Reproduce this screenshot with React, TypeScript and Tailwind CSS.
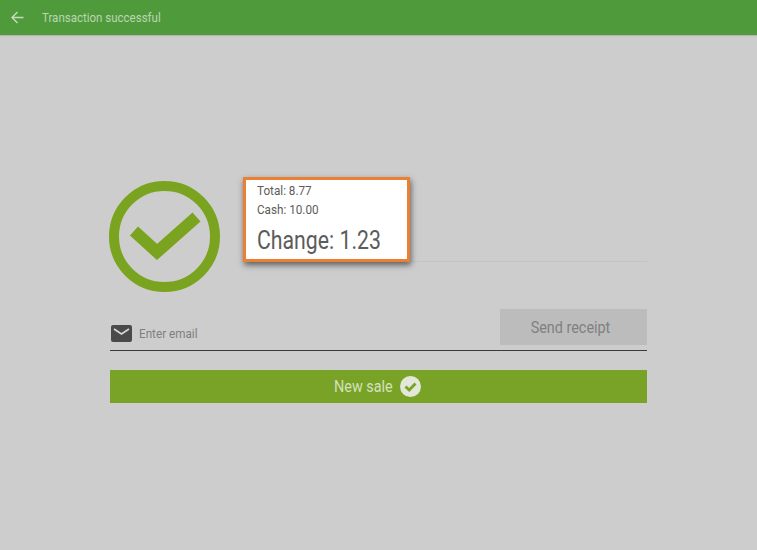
export default function App() {
  return (
    <div className="h-[550px] w-[757px] overflow-hidden bg-[#cdcdcd] font-['Roboto',sans-serif]">
      <header className="flex h-[35px] items-center bg-[#4f9a3b] pl-[11px] shadow-[0_1px_1px_rgba(0,0,0,0.12)]">
        <svg width="13" height="13" viewBox="0 0 13 13" fill="none" stroke="#c5dcbd" strokeWidth="1.4">
          <path d="M12.5 6.5H1.2M6.5 1L1 6.5L6.5 12" />
        </svg>
        <span className="ml-[18px] origin-left scale-x-[0.885] text-[13px] text-[#bcd6b3]">Transaction successful</span>
      </header>
      <main className="mx-[110px] flex flex-col pt-[146px]">
        <section className="flex items-start">
          <svg width="112" height="112" viewBox="0 0 112 112" fill="none" className="-ml-px shrink-0">
            <circle cx="55.5" cy="55.5" r="50.5" stroke="#7aa31f" strokeWidth="10" />
            <path d="M25 50L48 71L87.5 36" stroke="#7aa31f" strokeWidth="12" />
          </svg>
          <div className="relative ml-[23px] h-[81px] flex-1 border-b border-[#c4c4c4]">
            <div className="absolute -left-px -top-[4px] h-[85px] w-[167px] border-[3px] border-[#ea8033] bg-white pl-[11px] pt-[2px] text-[#5c5c5c] shadow-[1px_3px_6px_rgba(0,0,0,0.55)]">
              <p className="origin-left scale-x-[0.9] text-[13px] leading-[18px]">Total: 8.77</p>
              <p className="origin-left scale-x-[0.9] text-[13px] leading-[19px]">Cash: 10.00</p>
              <p className="mt-[7px] origin-left scale-x-[0.85] text-[25px] leading-[30px]">Change: 1.23</p>
            </div>
          </div>
        </section>
        <section className="mt-[16px] flex h-[42px] items-start border-b border-[#3a3a3a]">
          <div className="flex h-[41px] flex-1 items-center pl-px pt-[8px]">
            <svg width="21" height="17" viewBox="0 0 21 17">
              <rect width="21" height="17" rx="2" fill="#4a4a4a" />
              <path d="M3 4L10.5 9L18 4" fill="none" stroke="#d8d8d8" strokeWidth="1.6" />
            </svg>
            <span className="ml-[7px] origin-left scale-x-[0.9] text-[13px] text-[#7f7f7f]">Enter email</span>
          </div>
          <button className="h-[36px] w-[147px] bg-[#bcbcbc] pr-[6px] pt-[2px] text-[#808080]">
            <span className="block scale-x-[0.9] text-[16px]">Send receipt</span>
          </button>
        </section>
        <button className="mt-[19px] flex h-[33px] w-[537px] items-center justify-center gap-[7px] bg-[#78a327] pr-[2px] text-[#d5e0bd]">
          <span className="block w-[59px] origin-left scale-x-[0.9] whitespace-nowrap text-[16px]">New sale</span>
          <svg width="21" height="21" viewBox="0 0 21 21" fill="none">
            <circle cx="10.5" cy="10.5" r="10.5" fill="#e2e7d7" />
            <path d="M5.5 10.5L9.2 14L15.5 7.5" stroke="#78a327" strokeWidth="2.8" />
          </svg>
        </button>
      </main>
    </div>
  );
}
